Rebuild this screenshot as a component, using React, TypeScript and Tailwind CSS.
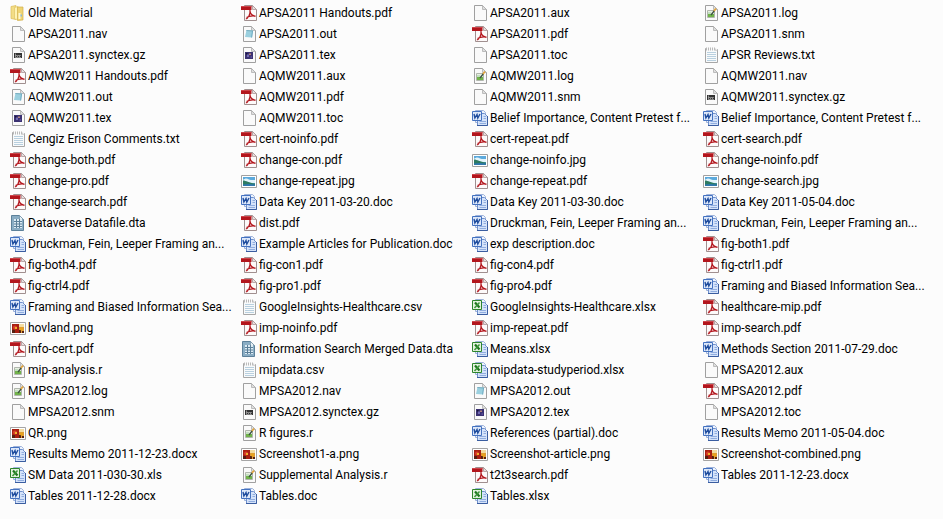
import type { ReactNode } from "react";

type Kind =
  | "folder" | "page" | "archive" | "pdf" | "output" | "tex" | "log"
  | "text" | "word" | "excel" | "data" | "photo" | "picture";

const kindByExtension: Record<string, Kind> = {
  nav: "page", aux: "page", snm: "page", toc: "page",
  gz: "archive", pdf: "pdf", out: "output", tex: "tex",
  log: "log", r: "log", txt: "text", csv: "text",
  doc: "word", docx: "word", xls: "excel", xlsx: "excel",
  dta: "data", jpg: "photo", png: "picture",
};

type Entry = string | { name: string; kind: Kind };

const entries: Entry[] = [
  { name: "Old Material", kind: "folder" }, "APSA2011 Handouts.pdf", "APSA2011.aux", "APSA2011.log",
  "APSA2011.nav", "APSA2011.out", "APSA2011.pdf", "APSA2011.snm",
  "APSA2011.synctex.gz", "APSA2011.tex", "APSA2011.toc", "APSR Reviews.txt",
  "AQMW2011 Handouts.pdf", "AQMW2011.aux", "AQMW2011.log", "AQMW2011.nav",
  "AQMW2011.out", "AQMW2011.pdf", "AQMW2011.snm", "AQMW2011.synctex.gz",
  "AQMW2011.tex", "AQMW2011.toc",
  { name: "Belief Importance, Content Pretest f...", kind: "word" },
  { name: "Belief Importance, Content Pretest f...", kind: "word" },
  "Cengiz Erison Comments.txt", "cert-noinfo.pdf", "cert-repeat.pdf", "cert-search.pdf",
  "change-both.pdf", "change-con.pdf", "change-noinfo.jpg", "change-noinfo.pdf",
  "change-pro.pdf", "change-repeat.jpg", "change-repeat.pdf", "change-search.jpg",
  "change-search.pdf", "Data Key 2011-03-20.doc", "Data Key 2011-03-30.doc", "Data Key 2011-05-04.doc",
  "Dataverse Datafile.dta", "dist.pdf",
  { name: "Druckman, Fein, Leeper Framing an...", kind: "word" },
  { name: "Druckman, Fein, Leeper Framing an...", kind: "word" },
  { name: "Druckman, Fein, Leeper Framing an...", kind: "word" },
  "Example Articles for Publication.doc", "exp description.doc", "fig-both1.pdf",
  "fig-both4.pdf", "fig-con1.pdf", "fig-con4.pdf", "fig-ctrl1.pdf",
  "fig-ctrl4.pdf", "fig-pro1.pdf", "fig-pro4.pdf",
  { name: "Framing and Biased Information Sea...", kind: "word" },
  { name: "Framing and Biased Information Sea...", kind: "word" },
  "GoogleInsights-Healthcare.csv", "GoogleInsights-Healthcare.xlsx", "healthcare-mip.pdf",
  "hovland.png", "imp-noinfo.pdf", "imp-repeat.pdf", "imp-search.pdf",
  "info-cert.pdf", "Information Search Merged Data.dta", "Means.xlsx", "Methods Section 2011-07-29.doc",
  "mip-analysis.r", "mipdata.csv", "mipdata-studyperiod.xlsx", "MPSA2012.aux",
  "MPSA2012.log", "MPSA2012.nav", "MPSA2012.out", "MPSA2012.pdf",
  "MPSA2012.snm", "MPSA2012.synctex.gz", "MPSA2012.tex", "MPSA2012.toc",
  "QR.png", "R figures.r", "References (partial).doc", "Results Memo 2011-05-04.doc",
  "Results Memo 2011-12-23.docx", "Screenshot1-a.png", "Screenshot-article.png", "Screenshot-combined.png",
  "SM Data 2011-030-30.xls", "Supplemental Analysis.r", "t2t3search.pdf", "Tables 2011-12-23.docx",
  "Tables 2011-12-28.docx", "Tables.doc", "Tables.xlsx",
];

function Sheet({ children }: { children?: ReactNode }) {
  return (
    <>
      <path d="M2.5.5h8l4 4v11h-12z" fill="#fafafa" stroke="#a0a0a0" />
      <path d="M10.5.5v4h4z" fill="#dedede" stroke="#b0b0b0" strokeWidth=".8" />
      {children}
    </>
  );
}

function OfficePages() {
  return (
    <>
      <path d="M3.5.5h8l2 2v10h-10z" fill="#edf3fd" stroke="#9db2da" />
      <path d="M5.500 3.500h7l3 3v9h-10z" fill="#d5e3fa" stroke="#6f90cc" />
      <path d="M15.500 6v9.500H5" fill="none" stroke="#3a5da0" />
      <path d="M11.500 6.500H14M11.500 8.500H14M7.500 11.500H14M7.500 13.500H14" stroke="#90addf" />
    </>
  );
}

const drawings: Record<Kind, ReactNode> = {
  folder: (
    <>
      <path d="M1 1.500 6 .5v14l-5-1z" fill="#f3dd86" stroke="#dcbc58" strokeWidth=".7" />
      <path d="M4.500 2.500 8 1.500v13l-3.500-.5z" fill="#fff3b4" stroke="#e0c466" strokeWidth=".7" />
      <path d="M7.500 2H13v13l-5.500.5z" fill="#efd472" stroke="#d3b04a" strokeWidth=".7" />
      <path d="M8.500 8h2v6h-2z" fill="#fdf6cf" />
      <path d="M10.500 9.500H12v2h-1.500z" fill="#8db9d8" />
    </>
  ),
  page: <Sheet />,
  archive: (
    <Sheet>
      <path d="M4 6h8v5H4z" fill="#333" />
      <path d="M5.500 6.500v4h2v-2h-2M8 8.500h2.500l-2 2H11" fill="none" stroke="#b5b5b5" strokeWidth=".7" />
    </Sheet>
  ),
  pdf: (
    <>
      <path d="M3.500.5h8l4 4v11h-12z" fill="#fdfafa" stroke="#a08f8f" />
      <path d="M11.500.5v4h4z" fill="#eadede" stroke="#a99797" strokeWidth=".8" />
      <path d="M0 1h10.500v4H0z" fill="#b3161d" />
      <path d="M0 1h10.500v1H0z" fill="#cd444a" />
      <path d="M9 5c.3 2.500 0 4.500-1.300 6.500-.9 1.500-2.200 2.500-2.700 2M9 6.500c.7 2.700 2.200 4.300 5.500 4.800M5.500 12.500c2.300-1.500 5-2 9-1.500" fill="none" stroke="#b3161d" strokeWidth="1.200" />
    </>
  ),
  output: (
    <Sheet>
      <path d="m5.500 4 6.500.5-1 7-7-.5z" fill="#9bd0df" />
      <path d="m5.500 4 6.500.5-.2 1-6.500-.5z" fill="#78adbf" />
      <path d="m11 5 1 .1-.9 6.400-1-.1z" fill="#70abc1" />
    </Sheet>
  ),
  tex: (
    <Sheet>
      <path d="M4 5h8v7H4z" fill="#3b3272" />
      <path d="M5 6h1.500v1.500H5z" fill="#171536" />
      <path d="M6 7.500h2V10H6z" fill="#736bb3" />
      <path d="M8 6.500h2V8H8z" fill="#b5857f" />
      <path d="M9.500 9h1.500v2H9.500z" fill="#574b96" />
    </Sheet>
  ),
  log: (
    <Sheet>
      <path d="M4.500 5.500h7v7h-7z" fill="#e9f0e2" stroke="#b0b6ad" />
      <path d="M5 9h6v3H5z" fill="#71b34a" />
      <path d="M5 7h3v2H5z" fill="#c3dfc1" />
      <path d="m8 10 3.500-4.500" stroke="#3c5140" strokeWidth="1.300" />
      <path d="m11 6 2-2.500" stroke="#e3a53c" strokeWidth="1.800" />
    </Sheet>
  ),
  text: (
    <>
      <path d="M2.500 1.500h11l1 1v13h-12z" fill="#f8fafb" stroke="#a7a7a7" />
      <path d="M4 5.500h9M4 7.500h9M4 9.500h9M4 11.500h9M4 13.500h9" stroke="#b9d0df" />
      <path d="M3 1.500h11" stroke="#fafafa" strokeWidth="2" />
      <path d="M3.500.5v3M5.500.5v3M7.500.5v3M9.500.5v3M11.500.5v3" stroke="#a9a9a9" strokeWidth=".8" />
      <path d="m12 1 2.500 3H12z" fill="#d4d4d4" />
    </>
  ),
  word: (
    <>
      <OfficePages />
      <path d="M.5 1.500h9v9h-9z" fill="#dde8fa" stroke="#4472c0" />
      <path d="m2 4 .9 4L5 4.500 5.800 8 8 4" fill="none" stroke="#1f4d9e" strokeWidth="1.400" />
    </>
  ),
  excel: (
    <>
      <OfficePages />
      <path d="M.5 1.500h9v9h-9z" fill="#e4f3df" stroke="#2d852c" />
      <path d="m3 3.500 4.500 5" stroke="#1d761d" strokeWidth="2.200" />
      <path d="M7.500 3.500 2.500 9" stroke="#3b963a" strokeWidth="1.500" />
    </>
  ),
  data: (
    <>
      <path d="M1.500.5h8l4 4v11h-12z" fill="#8aadc4" stroke="#5d819a" />
      <path d="M9.500.5v4h4z" fill="#e8f1f6" stroke="#7796a9" strokeWidth=".8" />
      <path d="M4 4h8v9H4z" fill="#dcebf4" />
      <path d="M4 6.500h8M4 9h8M4 11.500h8M6.500 4v9M9.500 4v9" stroke="#5c8099" />
    </>
  ),
  photo: (
    <>
      <path d="M.5 2.500h15v12H.5z" fill="#fff" stroke="#a0a0a0" />
      <path d="M2 4h12v9H2z" fill="#5ba9dc" />
      <path d="M2 7c2-2 4-2 6-.5 2 .8 4 .5 6 .5v3H2z" fill="#e3f4fb" />
      <path d="M2 7.500c3 0 6 2.500 12 3V12H2z" fill="#2d7b62" />
      <path d="M2 11.500c4-.8 8-.8 12 0V13H2z" fill="#2f78ad" />
    </>
  ),
  picture: (
    <>
      <path d="M.5 2.500h15v12H.5z" fill="#fff" stroke="#a5a5a5" />
      <path d="M2 4h12v9H2z" fill="#dd9c35" />
      <path d="M2 4h7v9H2z" fill="#a81f12" />
      <path d="M9 4h5v3H9z" fill="#f3dca1" />
      <circle cx="5" cy="7.500" r="2" fill="#d9432b" />
      <path d="M5 7h2v2H5z" fill="#f0b32d" />
      <path d="M2 10h3v3H2zM9 10h2v3H9zM12 11h2v2h-2z" fill="#562011" />
      <circle cx="11.500" cy="9" r="1.500" fill="#eba51c" />
    </>
  ),
};

function FileItem({ entry }: { entry: Entry }) {
  const name = typeof entry === "string" ? entry : entry.name;
  const kind =
    typeof entry === "string"
      ? kindByExtension[entry.slice(entry.lastIndexOf(".") + 1)]
      : entry.kind;
  return (
    <li className="flex h-[21px] items-center gap-0.5 pt-px">
      <svg className="size-4 shrink-0" viewBox="0 0 16 16" aria-hidden="true">
        {drawings[kind]}
      </svg>
      <span className="whitespace-nowrap">{name}</span>
    </li>
  );
}

export default function App() {
  return (
    <main className="min-h-screen bg-[#fcfcfc] pt-0.5 pl-2.5 font-['Roboto','Noto_Sans',sans-serif] text-[12px] leading-5 text-black">
      <ul className="grid grid-cols-[repeat(auto-fill,231px)]">
        {entries.map((entry, index) => (
          <FileItem key={index} entry={entry} />
        ))}
      </ul>
    </main>
  );
}
